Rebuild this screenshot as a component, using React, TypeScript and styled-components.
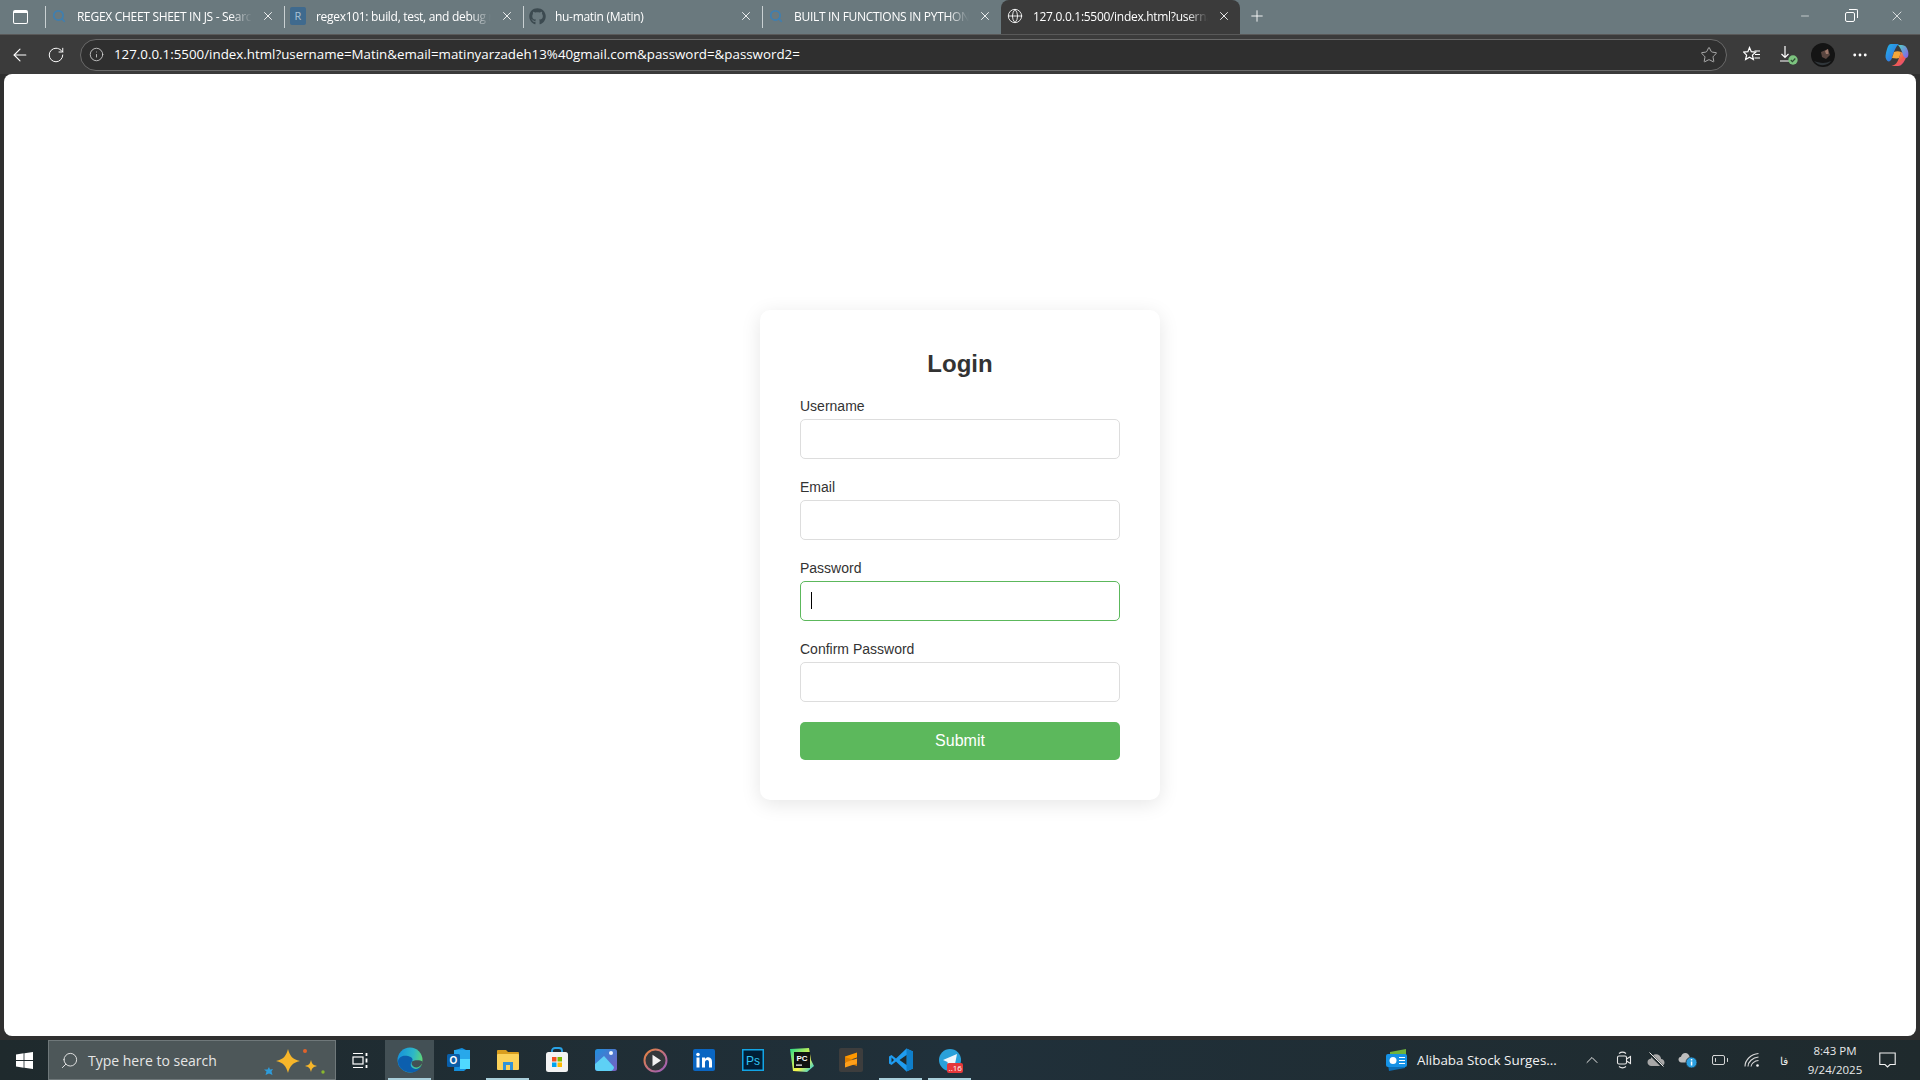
import React from 'react';
import styled, { createGlobalStyle } from 'styled-components';
import {
  ArrowLeft,
  BatteryLow,
  ChevronUp,
  Globe,
  Info,
  Minus,
  MoreHorizontal,
  Plus,
  RotateCw,
  Search,
  Star,
  X,
} from 'lucide-react';
import { FaGithub } from 'react-icons/fa';

const GlobalStyle = createGlobalStyle`
  html, body {
    margin: 0;
    padding: 0;
    height: 100%;
    overflow: hidden;
    background: #2f2f2f;
  }
  * {
    box-sizing: border-box;
  }
`;

const Screen = styled.div`
  width: 1920px;
  height: 1080px;
  display: flex;
  flex-direction: column;
  font-family: "Open Sans", "Noto Sans", sans-serif;
`;

/* tab strip */
const TabStrip = styled.div`
  height: 34px;
  flex: none;
  display: flex;
  align-items: stretch;
  background: #6a797e;
`;

const WindowButton = styled.div`
  width: 40px;
  flex: none;
  margin-right: 5px;
  display: flex;
  align-items: center;
  justify-content: center;
  color: #fff;
`;

const PanelGlyph = styled.div`
  width: 15px;
  height: 14px;
  border: 1.5px solid #fff;
  border-top-width: 3px;
  border-radius: 2px;
`;

const Tab = styled.div<{ $active?: boolean }>`
  width: 239px;
  position: relative;
  display: flex;
  align-items: center;
  padding: 0 9px 2px 5px;
  gap: 9px;
  flex: none;
  color: #fff;
  background: ${p => (p.$active ? '#3b3b3b' : 'transparent')};
  border-radius: ${p => (p.$active ? '8px 8px 0 0' : '0')};
  &::before {
    content: '';
    display: ${p => (p.$active ? 'none' : 'block')};
    position: absolute;
    left: 0;
    top: 6px;
    bottom: 6px;
    width: 1px;
    background: #c9d0d2;
  }
`;

const TabIcon = styled.div`
  width: 18px;
  height: 18px;
  flex: none;
  display: flex;
  align-items: center;
  justify-content: center;
`;

const RegexBadge = styled.div`
  width: 16px;
  height: 18px;
  background: #3f6a8e;
  border-radius: 2px;
  color: #a9c2d6;
  font-size: 11px;
  line-height: 18px;
  text-align: center;
`;

const TabTitle = styled.div`
  flex: 1;
  min-width: 0;
  overflow: hidden;
  white-space: nowrap;
  font-size: 12px;
  letter-spacing: -0.3px;
  -webkit-mask-image: linear-gradient(to right, #000 88%, transparent 100%);
  mask-image: linear-gradient(to right, #000 88%, transparent 100%);
`;

const TabClose = styled.div`
  flex: none;
  width: 14px;
  display: flex;
  justify-content: center;
  color: #fff;
`;

const NewTab = styled.div`
  width: 34px;
  display: flex;
  align-items: center;
  justify-content: center;
  padding-bottom: 2px;
  color: #fff;
`;

const StripSpacer = styled.div`
  flex: 1;
`;

const Caption = styled.div`
  width: 46px;
  display: flex;
  align-items: center;
  justify-content: center;
  padding-bottom: 2px;
  color: #fff;
`;

const RestoreGlyph = styled.div`
  width: 10px;
  height: 10px;
  border: 1px solid #fff;
  border-radius: 2px;
  position: relative;
  margin: 2px 2px 0 0;
  &::after {
    content: '';
    position: absolute;
    top: -4px;
    right: -4px;
    width: 8px;
    height: 8px;
    border-top: 1px solid #fff;
    border-right: 1px solid #fff;
    border-radius: 0 2px 0 0;
  }
`;

/* toolbar */
const Toolbar = styled.div`
  height: 40px;
  flex: none;
  display: flex;
  align-items: center;
  background: #3b3b3b;
  border-top: 1px solid #595959;
  color: #fff;
  padding-left: 4px;
`;

const ToolButton = styled.div<{ $width?: number }>`
  width: ${p => p.$width ?? 36}px;
  flex: none;
  display: flex;
  align-items: center;
  justify-content: center;
`;

const AddressBar = styled.div`
  width: 1647px;
  height: 32px;
  flex: none;
  margin-left: 5px;
  border: 1px solid #6a6a6a;
  border-radius: 16px;
  background: #2f2f2f;
  display: flex;
  align-items: center;
  padding: 0 8px 0 8px;
  color: #d8d8d8;
`;

const Url = styled.div`
  flex: 1;
  margin-left: 10px;
  padding-bottom: 2px;
  color: #fff;
  font-size: 13.33px;
  white-space: nowrap;
`;

/* page */
const Viewport = styled.main`
  flex: 1;
  min-height: 0;
  margin: 0 4px 4px 4px;
  background: #fff;
  border-radius: 8px;
  display: flex;
  align-items: center;
  justify-content: center;
  font-family: "Liberation Sans", Arial, sans-serif;
`;

const Card = styled.form`
  width: 400px;
  padding: 40px;
  background: #fff;
  border-radius: 10px;
  box-shadow: 0 4px 20px rgba(0, 0, 0, 0.1);
`;

const Heading = styled.h2`
  margin: 0 0 20px;
  font-size: 24px;
  line-height: 28px;
  font-weight: 700;
  text-align: center;
  color: #333;
`;

const Field = styled.div`
  margin-bottom: 20px;
  position: relative;
`;

const Label = styled.label`
  display: block;
  font-size: 14px;
  line-height: 16px;
  margin-bottom: 5px;
  color: #333;
`;

const Input = styled.input<{ $focused?: boolean }>`
  display: block;
  width: 100%;
  height: 40px;
  padding: 10px;
  font-size: 14px;
  border: 1px solid ${p => (p.$focused ? '#5cb85c' : '#ddd')};
  border-radius: 5px;
  outline: none;
  background: #fff;
  caret-color: transparent;
`;

const Caret = styled.div`
  position: absolute;
  left: 11px;
  top: 32px;
  width: 1px;
  height: 17px;
  background: #000;
`;

const SubmitButton = styled.button`
  display: block;
  width: 100%;
  height: 38px;
  border: none;
  border-radius: 5px;
  background: #5cb85c;
  color: #fff;
  font-family: inherit;
  font-size: 16px;
  cursor: pointer;
`;

/* taskbar */
const Taskbar = styled.footer`
  height: 40px;
  flex: none;
  display: flex;
  align-items: stretch;
  background: linear-gradient(90deg, #1f2a2d 0%, #20303a 50%, #1f2a2d 100%);
  color: #fff;
`;

const StartButton = styled.div`
  width: 48px;
  flex: none;
  display: flex;
  align-items: center;
  justify-content: center;
`;

const SearchBox = styled.div`
  width: 288px;
  flex: none;
  display: flex;
  align-items: center;
  background: #4d5759;
  border: 1px solid #6f787a;
  padding: 0 9px 0 11px;
  color: #e6e6e6;
`;

const SearchText = styled.div`
  margin-left: 9px;
  flex: 1;
  font-size: 14px;
`;

const TaskIcon = styled.div<{ $open?: boolean; $active?: boolean }>`
  width: 49.1px;
  flex: none;
  position: relative;
  display: flex;
  align-items: center;
  justify-content: center;
  background: ${p => (p.$active ? '#435055' : 'transparent')};
  &::after {
    content: '';
    display: ${p => (p.$open ? 'block' : 'none')};
    position: absolute;
    left: 3px;
    right: 3px;
    bottom: 0;
    height: 2px;
    background: #a9cfdb;
  }
`;

const TelegramBadge = styled.div`
  position: absolute;
  right: 11px;
  bottom: 7px;
  width: 16px;
  height: 10px;
  border-radius: 2px;
  background: #e5383b;
  color: #fff;
  font-size: 8px;
  line-height: 10px;
  text-align: center;
`;

const TaskSpacer = styled.div`
  flex: 1;
`;

const NewsWidget = styled.div`
  flex: none;
  display: flex;
  align-items: center;
  gap: 8px;
  font-size: 13.4px;
  width: 191px;
  white-space: nowrap;
  color: #f2f2f2;
`;

const TrayItem = styled.div`
  width: 32px;
  flex: none;
  display: flex;
  align-items: center;
  justify-content: center;
  color: #e8e8e8;
  font-size: 11px;
`;

const Clock = styled.div`
  width: 70px;
  flex: none;
  display: flex;
  flex-direction: column;
  align-items: center;
  justify-content: center;
  font-size: 11.5px;
  line-height: 19px;
  color: #e8e8e8;
`;

const Notify = styled.div`
  width: 35px;
  margin-right: 15px;
  flex: none;
  display: flex;
  align-items: center;
  justify-content: center;
`;

/* drawn logos */
const SearchFavicon = () => <Search size={14} color="#3f7fb0" strokeWidth={3} />;

const SparkleIcon = () => (
  <svg width="62" height="32" viewBox="0 0 62 32">
    <path d="M24 5 C26 12 28 15 36 17 C28 19 26 22 24 29 C22 22 20 19 12 17 C20 15 22 12 24 5Z" fill="#f7b62a" />
    <path d="M47 16 C48 20 49 21 53 22 C49 23 48 24 47 28 C46 24 45 23 41 22 C45 21 46 20 47 16Z" fill="#f7b62a" />
    <path d="M5 23 L6 25.500 L9 25 L7.500 27.500 L8.500 31 L5 29.500 L1.500 31 L2.500 27.500 L0 25.500 L3.500 25.500Z" fill="#2e9bd9" />
    <circle cx="41" cy="7" r="2" fill="#e2622a" />
    <circle cx="59" cy="28" r="1.700" fill="#8ab82e" />
  </svg>
);

const WindowsLogo = () => (
  <svg width="17" height="17" viewBox="0 0 17 17" fill="#fff">
    <path d="M0 2.5 7.6 1.3V8H0Z" />
    <path d="M8.4 1.2 17 0V8H8.4Z" />
    <path d="M0 9H7.6V15.7L0 14.6Z" />
    <path d="M8.4 9H17V17L8.4 15.8Z" />
  </svg>
);

const TaskViewIcon = () => (
  <svg width="17" height="17" viewBox="0 0 17 17" fill="none" stroke="#fff" strokeWidth="1.2">
    <path d="M1 1.5H11M1 15.5H11" />
    <rect x="1" y="5" width="10" height="7" />
    <path d="M14.5 1V4M14.5 6.5V10.5M14.5 13V16" strokeWidth="1.8" />
  </svg>
);

const EdgeIcon = () => (
  <svg width="26" height="26" viewBox="0 0 26 26">
    <defs>
      <linearGradient id="edgeB" x1="0" y1="0.300" x2="1" y2="0.500">
        <stop offset="0" stopColor="#1592dc" />
        <stop offset="0.600" stopColor="#2db7c8" />
        <stop offset="1" stopColor="#5fd675" />
      </linearGradient>
    </defs>
    <circle cx="13" cy="13" r="12.500" fill="url(#edgeB)" />
    <path d="M1 14 C2 9 7 8 11 9 C15 10 16.500 12 15 14.500 C13.500 16 13 18.500 15 20.500 C18 23 22 22 24.500 18.500 C22.500 23.500 17.500 26 13 25.500 C6 25 1 20 1 14Z" fill="#0c5fae" />
    <path d="M15 14.500 C18 12.500 23.500 13 25.500 14.500 C25.500 17 23 20 19.500 20.500 C16.500 20.800 13.500 17.500 15 14.500Z" fill="#435055" />
  </svg>
);

const OutlookIcon = () => (
  <svg width="26" height="26" viewBox="0 0 26 26">
    <path d="M9 3 L16 1 L24 5 V19 L18 24 H8 Z" fill="#1490df" />
    <path d="M8 3H24V12H8Z" fill="#28a8ea" />
    <path d="M14 12H24V22H14Z" fill="#50d9ff" />
    <rect x="1" y="7" width="13" height="13" rx="1.500" fill="#0a5ea8" />
    <text x="7.500" y="17" fontSize="10" fontWeight="700" fill="#fff" textAnchor="middle" fontFamily="Liberation Sans, sans-serif">O</text>
  </svg>
);

const ExplorerIcon = () => (
  <svg width="24" height="22" viewBox="0 0 24 22">
    <path d="M1 2C1 1.500 1.500 1 2 1H10L12 3H22C22.500 3 23 3.500 23 4V7H1Z" fill="#d99e1e" />
    <rect x="1" y="5" width="22" height="16" rx="1" fill="#fbd25a" />
    <path d="M7 21V13H17V21H14V16H10V21Z" fill="#2f92d8" />
  </svg>
);

const StoreIcon = () => (
  <svg width="24" height="26" viewBox="0 0 24 26">
    <path d="M7 6V3.500C7 2 8.500 1 10 1H14C15.500 1 17 2 17 3.500V6" fill="none" stroke="#29a3e8" strokeWidth="1.800" />
    <rect x="1" y="5" width="22" height="20" rx="2.500" fill="#f3f3f3" />
    <rect x="7" y="10" width="4.500" height="4.500" fill="#f25022" />
    <rect x="12.500" y="10" width="4.500" height="4.500" fill="#7fba00" />
    <rect x="7" y="15.500" width="4.500" height="4.500" fill="#00a4ef" />
    <rect x="12.500" y="15.500" width="4.500" height="4.500" fill="#ffb900" />
  </svg>
);

const PhotosIcon = () => (
  <svg width="22" height="22" viewBox="0 0 22 22">
    <defs>
      <linearGradient id="photosBg" x1="0" y1="0" x2="1" y2="1">
        <stop offset="0" stopColor="#1f8fdc" />
        <stop offset="1" stopColor="#7a5fc0" />
      </linearGradient>
    </defs>
    <rect width="22" height="22" rx="2.500" fill="url(#photosBg)" />
    <circle cx="16" cy="4" r="2" fill="#eef6ff" />
    <path d="M0 15 L9 7 L19 18 C19 20 17.500 22 15 22 H3 C1 22 0 20.500 0 19Z" fill="#5ed0f5" />
  </svg>
);

const PlayerIcon = () => (
  <svg width="25" height="25" viewBox="0 0 25 25">
    <defs>
      <linearGradient id="playerRing" x1="0" y1="0" x2="1" y2="1">
        <stop offset="0" stopColor="#e8843c" />
        <stop offset="1" stopColor="#9a5cc0" />
      </linearGradient>
    </defs>
    <circle cx="12.500" cy="12.500" r="11" fill="#33383b" stroke="url(#playerRing)" strokeWidth="2" />
    <path d="M9.500 6.800 L18 12.500 L9.500 18.200Z" fill="#f3f3f3" />
  </svg>
);

const LinkedInIcon = () => (
  <svg width="22" height="22" viewBox="0 0 22 22">
    <rect width="22" height="22" rx="2" fill="#0a66c2" />
    <rect x="3.500" y="8.500" width="3" height="10" fill="#fff" />
    <circle cx="5" cy="5.500" r="1.800" fill="#fff" />
    <path d="M9 8.500H12V10C12.800 8.800 14 8.200 15.500 8.300C18 8.500 19 10.200 19 13V18.500H16V13.500C16 12 15.500 11 14.200 11C12.800 11 12 12 12 13.500V18.500H9Z" fill="#fff" />
  </svg>
);

const PhotoshopIcon = () => (
  <svg width="22" height="22" viewBox="0 0 22 22">
    <rect x="0.750" y="0.750" width="20.500" height="20.500" fill="#001e36" stroke="#12a5e6" strokeWidth="1.500" />
    <text x="11" y="15.500" fontSize="12" fill="#31c5f4" textAnchor="middle" fontFamily="Liberation Sans, sans-serif">Ps</text>
  </svg>
);

const PyCharmIcon = () => (
  <svg width="24" height="24" viewBox="0 0 24 24">
    <defs>
      <linearGradient id="pycharmEdge" x1="0" y1="0" x2="1" y2="1">
        <stop offset="0" stopColor="#21d789" />
        <stop offset="0.600" stopColor="#fcf84a" />
        <stop offset="1" stopColor="#07c3f2" />
      </linearGradient>
    </defs>
    <path d="M0 1 L19 0 L21 12 L24 18 L17 24 L3 23Z" fill="url(#pycharmEdge)" />
    <rect x="4" y="4" width="16" height="16" fill="#111" />
    <text x="12" y="12.500" fontSize="8" fontWeight="700" fill="#fff" textAnchor="middle" fontFamily="Liberation Sans, sans-serif">PC</text>
    <rect x="6" y="16.500" width="6" height="1.200" fill="#fff" />
  </svg>
);

const SublimeIcon = () => (
  <svg width="24" height="24" viewBox="0 0 24 24">
    <rect width="24" height="24" rx="2" fill="#3d3d3d" />
    <path d="M18 4.500 V9.500 L6 13.500 V8.500Z" fill="#ff9800" />
    <path d="M6 9 L18 13 V18 L6 14Z" fill="#e07f00" />
    <path d="M18 10.500 V15.500 L6 19.500 V14.500Z" fill="#ff9f1a" />
  </svg>
);

const VSCodeIcon = () => (
  <svg width="24" height="24" viewBox="0 0 24 24">
    <path d="M17.500 0.500 L24 3.500 V20.500 L17.500 23.500 L7 13.500 L2.500 17 L0 15.500 V8.500 L2.500 7 L7 10.500Z" fill="#1f9cf0" />
    <path d="M17.500 0.500 L24 3.500 V20.500 L17.500 23.500Z" fill="#0f7ec9" />
    <path d="M17.500 7 L10.500 12 L17.500 17Z" fill="#1f2a2d" />
    <path d="M2.500 9.500 L5 12 L2.500 14.500Z" fill="#1f2a2d" />
  </svg>
);

const TelegramIcon = () => (
  <svg width="22" height="22" viewBox="0 0 22 22">
    <circle cx="11" cy="11" r="11" fill="#2aa1da" />
    <path d="M4 11 L18 5 L15.500 17.500 L11 14.500 L9 16.500 L8.500 13Z" fill="#eef7fc" />
  </svg>
);

const NewsIcon = () => (
  <svg width="24" height="24" viewBox="0 0 24 24">
    <path d="M5 4 L21 1 V16 L5 19Z" fill="#6fb23c" />
    <path d="M3 17 L20 14 V20 L4 23Z" fill="#0b6fb8" />
    <rect x="1" y="6" width="21" height="13" rx="2" fill="#1592e6" />
    <circle cx="8" cy="12.500" r="3.500" fill="#fff" />
    <path d="M14 9.500H20M14 12.500H20M14 15.500H20" stroke="#fff" strokeWidth="1.200" />
  </svg>
);

const MeetIcon = () => (
  <svg width="16" height="18" viewBox="0 0 16 18" fill="none" stroke="#e8e8e8" strokeWidth="1.100">
    <rect x="1.500" y="5" width="9" height="8" rx="1.500" />
    <path d="M10.500 8 L14.500 5.500 V12.500 L10.500 10" />
    <path d="M3 2.500 C5 1 8 1 10 2.500 M3 15.500 C5 17 8 17 10 15.500" />
  </svg>
);

const CloudOffIcon = () => (
  <svg width="18" height="16" viewBox="0 0 18 16">
    <path d="M4.500 14 C2 14 0.500 12.300 0.500 10.300 C0.500 8.300 2 6.800 3.800 6.800 C4.300 4 6.500 2.300 9 2.300 C11.800 2.300 13.800 4.300 14.200 7 C16 7.200 17.500 8.600 17.500 10.500 C17.500 12.500 16 14 14 14Z" fill="#a8a8a8" />
    <path d="M2 1 L16 15" stroke="#1f2a2d" strokeWidth="2.500" />
    <path d="M2.500 0.500 L16.500 14.500" stroke="#e8e8e8" strokeWidth="1" />
  </svg>
);

const CloudInfoIcon = () => (
  <svg width="20" height="18" viewBox="0 0 20 18">
    <path d="M3.500 11.500 C1.500 11.500 0.500 10 0.500 8.500 C0.500 7 1.700 5.700 3 5.700 C3.500 3.500 5.200 2 7.300 2 C9.700 2 11.300 3.700 11.700 6 C13 6.200 14 7.300 14 8.500 C14 10 13 11.500 11 11.500Z" fill="#bdbdbd" />
    <circle cx="13.500" cy="11.500" r="5.500" fill="#2b9fe0" stroke="#1f2a2d" strokeWidth="0.800" />
    <rect x="12.800" y="10.500" width="1.500" height="4" fill="#fff" />
    <rect x="12.800" y="8" width="1.500" height="1.500" fill="#fff" />
  </svg>
);

const WifiIcon = () => (
  <svg width="16" height="16" viewBox="0 0 16 16" fill="none" stroke="#d8d8d8" strokeWidth="1.100">
    <path d="M1 14.500 C1 8 7 2 14.500 1.500" />
    <path d="M4 14.500 C4 10 8.500 5.500 14.500 5" />
    <path d="M7 14.500 C7 12 10.500 8.500 14.500 8.500" />
    <circle cx="13.500" cy="13.500" r="1.300" fill="#f2f2f2" stroke="none" />
  </svg>
);

const NotifyIcon = () => (
  <svg width="17" height="16" viewBox="0 0 17 16" fill="none" stroke="#f2f2f2" strokeWidth="1.100">
    <path d="M0.800 1 H16.200 V12.500 H11 L8.500 15 L6 12.500 H0.800Z" />
  </svg>
);

const CopilotIcon = () => (
  <svg width="24" height="24" viewBox="0 0 24 24">
    <defs>
      <linearGradient id="copA" x1="0" y1="0" x2="1" y2="1">
        <stop offset="0" stopColor="#1fb6e8" />
        <stop offset="1" stopColor="#3d5fe0" />
      </linearGradient>
      <linearGradient id="copB" x1="0" y1="0" x2="1" y2="1">
        <stop offset="0" stopColor="#f6c244" />
        <stop offset="0.600" stopColor="#ef5b4f" />
        <stop offset="1" stopColor="#e0489b" />
      </linearGradient>
      <linearGradient id="copC" x1="0" y1="0" x2="1" y2="1">
        <stop offset="0" stopColor="#4fd1c5" />
        <stop offset="1" stopColor="#8a5be6" />
      </linearGradient>
    </defs>
    <path d="M5 23 C9 23 12 21 14 15 L16 9 L22 12 C20 18 17 23 13 23Z" fill="url(#copB)" />
    <path d="M6 1 H14 C11 3 9 8 7 15 C6 18 4 19 2.500 18 C0.500 16 0 14 1 10 C2 6 3 1 6 1Z" fill="url(#copA)" />
    <path d="M13 2 H17 C20 2 22 4 23 8 C24 12 23 15 21 15 C19 15 18 12 17 9 C16 7 15 4 13 2Z" fill="url(#copC)" />
    <path d="M9 9 C11 8 14 8 16 9 L14 15 C12 16 9 15 7 15Z" fill="#f4a63a" />
  </svg>
);

const AvatarIcon = () => (
  <svg width="24" height="24" viewBox="0 0 24 24">
    <circle cx="12" cy="12" r="12" fill="#141414" />
    <path d="M10 9 L17 6 L19 12 L15 16 L11 14Z" fill="#5a4640" />
    <path d="M14 8 L17 6 L17.500 11 L15 11Z" fill="#a07a6c" />
    <path d="M3 18 C8 20 14 21 20 18 C17 23 8 24 3 18Z" fill="#30363a" />
  </svg>
);

const FavoritesIcon = () => (
  <svg width="18" height="18" viewBox="0 0 18 18" fill="none" stroke="#fff" strokeWidth="1.200">
    <path d="M6.500 1.500 L8.300 5.700 L12.700 6.100 L9.400 9.100 L10.400 13.500 L6.500 11.200 L2.600 13.500 L3.600 9.100 L0.600 6.100 L4.900 5.700Z" />
    <path d="M11.500 5H17M12 8.500H17M11.500 12H17" />
  </svg>
);

const DownloadIcon = () => (
  <svg width="20" height="20" viewBox="0 0 20 20" fill="none">
    <path d="M6 1V12.500M2.500 9L6 12.500L9.500 9M1 16H10" stroke="#fff" strokeWidth="1.200" />
    <circle cx="14" cy="15" r="4.700" fill="#7cc47f" />
    <path d="M11.800 15L13.400 16.600L16.300 13.500" stroke="#2f4a33" strokeWidth="1.200" />
  </svg>
);

const tabs = [
  { title: 'REGEX CHEET SHEET IN JS - Searc', icon: <SearchFavicon /> },
  { title: 'regex101: build, test, and debug r', icon: <RegexBadge>R</RegexBadge> },
  { title: 'hu-matin (Matin)', icon: <FaGithub size={17} color="#3c4a50" /> },
  { title: 'BUILT IN FUNCTIONS IN PYTHON', icon: <SearchFavicon /> },
];

const fields = [
  { id: 'username', label: 'Username', type: 'text' },
  { id: 'email', label: 'Email', type: 'text' },
  { id: 'password', label: 'Password', type: 'password', focused: true },
  { id: 'password2', label: 'Confirm Password', type: 'password' },
];

const taskIcons = [
  { key: 'taskview', icon: <TaskViewIcon /> },
  { key: 'edge', icon: <EdgeIcon />, open: true, active: true },
  { key: 'outlook', icon: <OutlookIcon /> },
  { key: 'explorer', icon: <ExplorerIcon />, open: true },
  { key: 'store', icon: <StoreIcon /> },
  { key: 'photos', icon: <PhotosIcon /> },
  { key: 'player', icon: <PlayerIcon /> },
  { key: 'linkedin', icon: <LinkedInIcon /> },
  { key: 'photoshop', icon: <PhotoshopIcon /> },
  { key: 'pycharm', icon: <PyCharmIcon /> },
  { key: 'sublime', icon: <SublimeIcon /> },
  { key: 'vscode', icon: <VSCodeIcon />, open: true },
  { key: 'telegram', icon: <TelegramIcon />, open: true, badge: '..16' },
];

const App: React.FC = () => {
  return (
    <Screen>
      <GlobalStyle />
      <TabStrip>
        <WindowButton>
          <PanelGlyph />
        </WindowButton>
        {tabs.map(tab => (
          <Tab key={tab.title}>
            <TabIcon>{tab.icon}</TabIcon>
            <TabTitle>{tab.title}</TabTitle>
            <TabClose>
              <X size={14} strokeWidth={1.5} />
            </TabClose>
          </Tab>
        ))}
        <Tab $active>
          <TabIcon>
            <Globe size={16} strokeWidth={1.3} />
          </TabIcon>
          <TabTitle>127.0.0.1:5500/index.html?usernam</TabTitle>
          <TabClose>
            <X size={14} strokeWidth={1.5} />
          </TabClose>
        </Tab>
        <NewTab>
          <Plus size={18} strokeWidth={1.2} />
        </NewTab>
        <StripSpacer />
        <Caption>
          <Minus size={12} strokeWidth={1.2} />
        </Caption>
        <Caption>
          <RestoreGlyph />
        </Caption>
        <Caption>
          <X size={16} strokeWidth={1.1} />
        </Caption>
      </TabStrip>

      <Toolbar>
        <ToolButton $width={32}>
          <ArrowLeft size={20} strokeWidth={1.3} />
        </ToolButton>
        <ToolButton $width={39}>
          <RotateCw size={18} strokeWidth={1.3} />
        </ToolButton>
        <AddressBar>
          <Info size={15} strokeWidth={1.3} />
          <Url>127.0.0.1:5500/index.html?username=Matin&amp;email=matinyarzadeh13%40gmail.com&amp;password=&amp;password2=</Url>
          <Star size={18} strokeWidth={1.2} color="#b8b8b8" />
        </AddressBar>
        <ToolButton $width={50}>
          <FavoritesIcon />
        </ToolButton>
        <ToolButton $width={24}>
          <DownloadIcon />
        </ToolButton>
        <ToolButton $width={44}>
          <AvatarIcon />
        </ToolButton>
        <ToolButton $width={30}>
          <MoreHorizontal size={18} strokeWidth={1.8} />
        </ToolButton>
        <ToolButton $width={44}>
          <CopilotIcon />
        </ToolButton>
      </Toolbar>

      <Viewport>
        <Card onSubmit={e => e.preventDefault()}>
          <Heading>Login</Heading>
          {fields.map(field => (
            <Field key={field.id}>
              <Label htmlFor={field.id}>{field.label}</Label>
              <Input id={field.id} type={field.type} $focused={field.focused} readOnly />
              {field.focused && <Caret />}
            </Field>
          ))}
          <SubmitButton type="submit">Submit</SubmitButton>
        </Card>
      </Viewport>

      <Taskbar>
        <StartButton>
          <WindowsLogo />
        </StartButton>
        <SearchBox>
          <Search size={19} strokeWidth={1.2} style={{ transform: 'scaleX(-1)' }} />
          <SearchText>Type here to search</SearchText>
          <SparkleIcon />
        </SearchBox>
        {taskIcons.map(item => (
          <TaskIcon key={item.key} $open={item.open} $active={item.active}>
            {item.icon}
            {item.badge && <TelegramBadge>{item.badge}</TelegramBadge>}
          </TaskIcon>
        ))}
        <TaskSpacer />
        <NewsWidget>
          <NewsIcon />
          Alibaba Stock Surges...
        </NewsWidget>
        <TrayItem>
          <ChevronUp size={20} strokeWidth={1.2} />
        </TrayItem>
        <TrayItem>
          <MeetIcon />
        </TrayItem>
        <TrayItem>
          <CloudOffIcon />
        </TrayItem>
        <TrayItem>
          <CloudInfoIcon />
        </TrayItem>
        <TrayItem>
          <BatteryLow size={18} strokeWidth={1.2} />
        </TrayItem>
        <TrayItem>
          <WifiIcon />
        </TrayItem>
        <TrayItem>فا</TrayItem>
        <Clock>
          <span>8:43 PM</span>
          <span>9/24/2025</span>
        </Clock>
        <Notify>
          <NotifyIcon />
        </Notify>
      </Taskbar>
    </Screen>
  );
};

export default App;
